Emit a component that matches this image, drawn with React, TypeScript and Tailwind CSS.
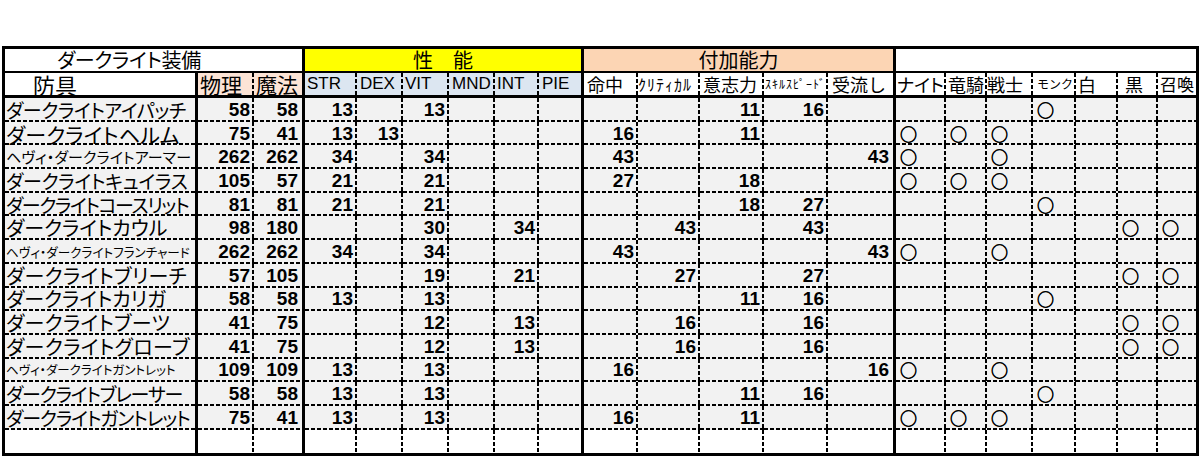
import React from "react";

const JP = "font-['Noto_Sans_CJK_JP',sans-serif]";
const LAT = "font-['Liberation_Sans',sans-serif]";

const GRID =
  "grid grid-cols-[193px_56px_51px_52px_46px_46px_46px_44px_45px_54px_62px_64px_64px_68px_50px_41px_46px_43px_42px_40px_38px]";

const DASH_BR =
  "bg-no-repeat [background-image:repeating-linear-gradient(to_right,#000_0_4px,transparent_4px_6px),repeating-linear-gradient(to_bottom,#000_0_4px,transparent_4px_6px)] [background-size:100%_2px,2px_100%] [background-position:left_bottom,right_top]";
const DASH_B =
  "bg-no-repeat [background-image:repeating-linear-gradient(to_right,#000_0_4px,transparent_4px_6px)] [background-size:100%_2px] [background-position:left_bottom]";
const DASH_R =
  "bg-no-repeat [background-image:repeating-linear-gradient(to_bottom,#000_0_4px,transparent_4px_6px)] [background-size:2px_100%] [background-position:right_top]";

const THICK = new Set([0, 2, 8, 13]);

type Row = {
  n: string;
  f: string;
  v: (number | null)[];
  j: string;
};

const rows: Row[] = [
  { n: "ダークライトアイパッチ", f: "text-[19px] tracking-[-0.4px]", v: [58, 58, 13, null, 13, null, null, null, null, null, 11, 16, null], j: "0001000" },
  { n: "ダークライトヘルム", f: "text-[21px] tracking-[0.2px]", v: [75, 41, 13, 13, null, null, null, null, 16, null, 11, null, null], j: "1110000" },
  { n: "ヘヴィ・ダークライトアーマー", f: "text-[15px] tracking-[0.1px]", v: [262, 262, 34, null, 34, null, null, null, 43, null, null, null, 43], j: "1010000" },
  { n: "ダークライトキュイラス", f: "text-[19px] tracking-[-0.3px]", v: [105, 57, 21, null, 21, null, null, null, 27, null, 18, null, null], j: "1110000" },
  { n: "ダークライトコースリット", f: "text-[19px] tracking-[-1.4px]", v: [81, 81, 21, null, 21, null, null, null, null, null, 18, 27, null], j: "0001000" },
  { n: "ダークライトカウル", f: "text-[20px] tracking-[0px]", v: [98, 180, null, null, 30, null, 34, null, null, 43, null, 43, null], j: "0000011" },
  { n: "ヘヴィ・ダークライトフランチャード", f: "text-[12.6px] tracking-[0px]", v: [262, 262, 34, null, 34, null, null, null, 43, null, null, null, 43], j: "1010000" },
  { n: "ダークライトブリーチ", f: "text-[20px] tracking-[0.3px]", v: [57, 105, null, null, 19, null, 21, null, null, 27, null, 27, null], j: "0000011" },
  { n: "ダークライトカリガ", f: "text-[20px] tracking-[0px]", v: [58, 58, 13, null, 13, null, null, null, null, null, 11, 16, null], j: "0001000" },
  { n: "ダークライトブーツ", f: "text-[20px] tracking-[0.3px]", v: [41, 75, null, null, 12, null, 13, null, null, 16, null, 16, null], j: "0000011" },
  { n: "ダークライトグローブ", f: "text-[20px] tracking-[0.4px]", v: [41, 75, null, null, 12, null, 13, null, null, 16, null, 16, null], j: "0000011" },
  { n: "ヘヴィ・ダークライトガントレット", f: "text-[12.5px] tracking-[0px]", v: [109, 109, 13, null, 13, null, null, null, 16, null, null, null, 16], j: "1010000" },
  { n: "ダークライトブレーサー", f: "text-[19px] tracking-[-1.2px]", v: [58, 58, 13, null, 13, null, null, null, null, null, 11, 16, null], j: "0001000" },
  { n: "ダークライトガントレット", f: "text-[19px] tracking-[-1.1px]", v: [75, 41, 13, null, 13, null, null, null, 16, null, 11, null, null], j: "1110000" },
];

type H = { t: string; c: string };

const headers: H[] = [
  { t: "物理", c: `${JP} text-[21px] pl-[2px] bg-[#fce4d6]` },
  { t: "魔法", c: `${JP} text-[21px] pl-[2px] bg-[#fce4d6]` },
  { t: "STR", c: `${LAT} text-[17px] pl-[2px] bg-[#dce6f1]` },
  { t: "DEX", c: `${LAT} text-[17px] pl-[3px] bg-[#dce6f1]` },
  { t: "VIT", c: `${LAT} text-[17px] pl-[2px] bg-[#dce6f1]` },
  { t: "MND", c: `${LAT} text-[17px] pl-[3px] bg-[#dce6f1]` },
  { t: "INT", c: `${LAT} text-[17px] pl-[2px] bg-[#dce6f1]` },
  { t: "PIE", c: `${LAT} text-[17px] pl-[3px] bg-[#dce6f1]` },
  { t: "命中", c: `${JP} text-[18px] pl-[3px] bg-white` },
  { t: "ｸﾘﾃｨｶﾙ", c: `${JP} text-[16px] tracking-[1px] pl-[0px] bg-white` },
  { t: "意志力", c: `${JP} text-[18px] pl-[3px] bg-white` },
  { t: "ｽｷﾙｽﾋﾟｰﾄﾞ", c: `${JP} text-[12px] tracking-[1px] pl-[1px] bg-white` },
  { t: "受流し", c: `${JP} text-[18px] pl-[4px] bg-white` },
  { t: "ナイト", c: `${JP} text-[18px] pl-[1px] bg-white [font-feature-settings:'palt']` },
  { t: "竜騎", c: `${JP} text-[18px] pl-[2px] bg-white` },
  { t: "戦士", c: `${JP} text-[18px] pl-[0px] bg-white` },
  { t: "モンク", c: `${JP} text-[12px] pl-[4px] bg-white` },
  { t: "白", c: `${JP} text-[18px] pl-[2px] bg-white` },
  { t: "黒", c: `${JP} text-[18px] pl-[7px] bg-white` },
  { t: "召喚", c: `${JP} text-[17px] pl-[2px] bg-white` },
];

function cellEdge(i: number, last: boolean) {
  if (THICK.has(i)) return `border-r-[3px] border-black ${last ? "" : DASH_B}`;
  if (i === 20) return last ? "" : DASH_B;
  return last ? DASH_R : DASH_BR;
}

function DataRow({ r }: { r: Row }) {
  return (
    <>
      <div className={`h-[23.7px] flex items-center whitespace-nowrap pl-[1px] bg-[#f2f2f2] text-black leading-[20px] ${JP} [font-feature-settings:'palt'] ${r.f} ${cellEdge(0, false)}`}>
        {r.n}
      </div>
      {r.v.map((x, k) => (
        <div
          key={k}
          className={`h-[23.7px] flex items-center justify-end pr-[4px] bg-[#f2f2f2] text-black ${LAT} font-bold text-[19px] leading-[20px] ${cellEdge(k + 1, false)}`}
        >
          {x ?? ""}
        </div>
      ))}
      {r.j.split("").map((c, k) => (
        <div
          key={"j" + k}
          className={`h-[23.7px] flex items-center pl-[4px] bg-[#f2f2f2] text-black ${JP} text-[17px] leading-[20px] [-webkit-text-stroke:0.6px_black] ${cellEdge(k + 14, false)}`}
        >
          {c === "1" ? "○" : ""}
        </div>
      ))}
    </>
  );
}

export default function App() {
  return (
    <div className="w-[1200px] h-[458px] bg-white overflow-hidden pt-[46px] pl-[2px]">
      <div className="w-fit border-[3px] border-black bg-white text-black">
        {/* title row */}
        <div className={GRID}>
          <div className={`col-span-3 h-[24px] flex items-center pl-[52px] bg-white border-r-[3px] border-b-2 border-black leading-[22px] ${JP} text-[20px] [font-feature-settings:'palt'] tracking-[-0.3px]`}>
            ダークライト装備
          </div>
          <div className={`col-span-6 h-[24px] flex items-center justify-center bg-[#ffff00] border-r-[3px] border-b-2 border-black leading-[22px] ${JP} text-[20px]`}>
            性　能
          </div>
          <div className={`col-span-5 h-[24px] flex items-center justify-center bg-[#fcd5b4] border-r-[3px] border-b-2 border-black leading-[22px] ${JP} text-[20px]`}>
            付加能力
          </div>
          <div className="col-span-7 h-[24px] bg-white border-b-2 border-black" />
        </div>
        {/* header row */}
        <div className={GRID}>
          <div className={`h-[25px] flex items-center pl-[28px] bg-white border-r-[3px] border-b-[3px] border-black leading-[22px] ${JP} text-[22px]`}>
            防具
          </div>
          {headers.map((h, k) => {
            const i = k + 1;
            const edge = THICK.has(i) ? "border-r-[3px]" : i === 20 ? "" : DASH_R;
            return (
              <div
                key={k}
                className={`h-[25px] flex items-center whitespace-nowrap border-b-[3px] border-black leading-[20px] ${h.c} ${edge}`}
              >
                {h.t}
              </div>
            );
          })}
        </div>
        {/* data rows */}
        <div className={GRID}>
          {rows.map((r, k) => (
            <DataRow key={k} r={r} />
          ))}
          {Array.from({ length: 21 }).map((_, i) => (
            <div key={"e" + i} className={`h-[23.7px] bg-white ${cellEdge(i, true)}`} />
          ))}
        </div>
      </div>
    </div>
  );
}
